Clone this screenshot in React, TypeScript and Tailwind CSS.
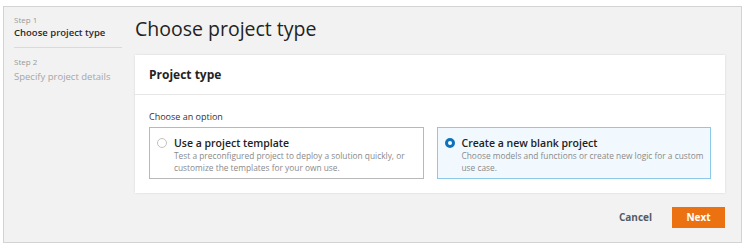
import React, { useState } from "react";

const font = { fontFamily: '"Open Sans", "Noto Sans", sans-serif' };

interface OptionProps {
  title: string;
  description: string;
  selected: boolean;
  onSelect: () => void;
}

function OptionTile({ title, description, selected, onSelect }: OptionProps) {
  return (
    <div
      onClick={onSelect}
      className={
        selected
          ? "flex-1 h-[52px] border border-[#8cc8ea] bg-[#f1f9fe] flex items-start gap-[7px] pl-[7px] pt-[8px] cursor-pointer"
          : "flex-1 h-[52px] border border-[#b8b8b8] bg-white flex items-start gap-[7px] pl-[7px] pt-[8px] cursor-pointer"
      }
    >
      {selected ? (
        <span className="mt-[2px] w-[10px] h-[10px] rounded-full border-[3px] border-[#0f73bb] bg-white shrink-0" />
      ) : (
        <span className="mt-[2px] w-[10px] h-[10px] rounded-full border border-[#c2c2c2] bg-white shrink-0" />
      )}
      <div className="flex flex-col">
        <span className="text-[10.5px] leading-[14px] font-semibold text-[#222]">{title}</span>
        <span className="text-[8.35px] leading-[12px] text-[#8a8a8a]">{description}</span>
      </div>
    </div>
  );
}

export default function App() {
  const [choice, setChoice] = useState<"template" | "blank">("blank");

  return (
    <div className="w-[750px] h-[250px] bg-white pt-[6px] pl-[3px]" style={font}>
      <div className="w-[739px] h-[237px] border border-[#d3d3d3] bg-[#f2f2f2] flex">
        <div className="w-[118px] pl-[10px] pt-[7px] shrink-0">
          <div className="border-b border-[#dadada] pb-[7px] pr-[2px]">
            <div className="text-[8px] leading-[12px] text-[#9a9a9a]">Step 1</div>
            <div className="text-[9.5px] leading-[14px] font-semibold text-[#2a2a2a]">Choose project type</div>
          </div>
          <div className="pt-[8px]">
            <div className="text-[8px] leading-[12px] text-[#9a9a9a] mb-[2px]">Step 2</div>
            <div className="text-[9.5px] leading-[14px] text-[#a6a6a6]">Specify project details</div>
          </div>
        </div>

        <div className="flex-1 pl-[13px] pr-[16px] pt-[8px]">
          <h1 className="text-[19.5px] leading-[28px] text-[#232323]">Choose project type</h1>
          <div className="mt-[12px] bg-white shadow-[0_0_2px_rgba(0,0,0,0.12)]">
            <div className="h-[40px] flex items-center pl-[14px] border-b border-[#e6e6e6]">
              <span className="text-[12px] font-bold text-[#232323]">Project type</span>
            </div>
            <div className="px-[14px] pt-[16px] pb-[14px]">
              <div className="text-[9px] leading-[12px] text-[#333] mb-[4px]">Choose an option</div>
              <div className="flex gap-[13px]">
                <OptionTile
                  title="Use a project template"
                  description="Test a preconfigured project to deploy a solution quickly, or customize the templates for your own use."
                  selected={choice === "template"}
                  onSelect={() => setChoice("template")}
                />
                <OptionTile
                  title="Create a new blank project"
                  description="Choose models and functions or create new logic for a custom use case."
                  selected={choice === "blank"}
                  onSelect={() => setChoice("blank")}
                />
              </div>
            </div>
          </div>
          <div className="flex justify-end items-center gap-[20px] mt-[14px]">
            <button className="text-[10px] font-bold text-[#545b64]">Cancel</button>
            <button className="w-[53px] h-[21px] bg-[#ec7211] text-white text-[10px] font-bold">Next</button>
          </div>
        </div>
      </div>
    </div>
  );
}
